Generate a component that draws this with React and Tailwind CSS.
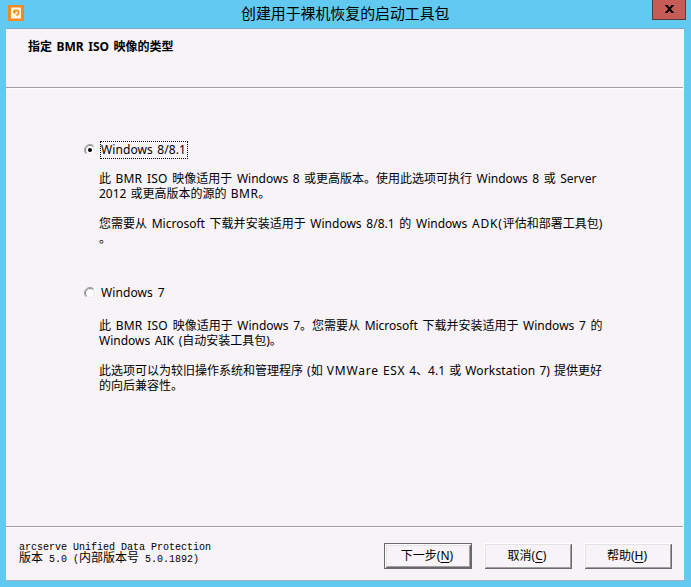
import React from 'react';

const ui = "font-['Noto_Sans','Noto_Sans_CJK_SC',sans-serif]";

function Line({ children, className = '' }) {
  return <div className={`h-[15px] whitespace-pre ${className}`}>{children}</div>;
}

function Latin({ children }) {
  return <span className="font-['Liberation_Mono','Noto_Sans_CJK_SC',monospace] text-[10px]">{children}</span>;
}

function Radio({ checked }) {
  return (
    <svg className="mr-1 shrink-0" width="12" height="12" viewBox="0 0 12 12" fill="none">
      <circle cx="6" cy="6" r="5" fill="#fff" />
      <path d="M2.1 9.9A5.5 5.5 0 0 1 9.9 2.1" stroke="#a09da0" />
      <path d="M2.8 9.2A4.5 4.5 0 0 1 9.2 2.8" stroke="#8a888a" />
      <path d="M2.1 9.9A5.5 5.5 0 0 0 9.9 2.1" stroke="#fff" />
      <path d="M2.8 9.2A4.5 4.5 0 0 0 9.2 2.8" stroke="#e3e3e3" />
      {checked && <circle cx="6" cy="6" r="2" fill="#000" />}
    </svg>
  );
}

function Button({ label, hotkey, primary }) {
  const frame = primary
    ? 'border border-[#696969] shadow-[inset_1px_1px_0_#fff,inset_-1px_-1px_0_#696969,inset_2px_2px_0_#e3e3e3,inset_-2px_-2px_0_#a0a0a0]'
    : 'shadow-[inset_1px_1px_0_#fff,inset_-1px_-1px_0_#696969,inset_2px_2px_0_#e3e3e3,inset_-2px_-2px_0_#a0a0a0]';
  return (
    <button className={`flex h-[26px] w-[88px] items-center justify-center pb-px pr-[2px] text-[12px] leading-[15px] ${frame}`}>
      {label}(<span className="underline underline-offset-2">{hotkey}</span>)
    </button>
  );
}

export default function App() {
  return (
    <div className={`flex h-[587px] w-[691px] flex-col bg-[#62caf0] text-black ${ui}`}>
      <header className="flex h-7 shrink-0 items-start">
        <svg className="ml-2 mt-[5px] shrink-0" width="16" height="16" viewBox="0 0 16 16" fill="none">
          <rect width="16" height="16" fill="#f28a24" />
          <rect x="3" y="2.5" width="10" height="11" rx="1" fill="#fff6e8" />
          <path d="M5.6 7.6A2.5 2.3 0 1 1 8.3 10" stroke="#f28a24" strokeWidth="1.6" />
          <path d="M5 6.5h3.2L6.8 9.2z" fill="#f28a24" />
        </svg>
        <h1 className="ml-[217px] mt-[3px] w-[210px] whitespace-nowrap text-[14.9px] leading-[21px]">创建用于裸机恢复的启动工具包</h1>
        <button className="ml-[201px] flex h-5 w-[34px] items-center justify-center border border-t-0 border-[#573936] bg-[#c75b55] pb-[2px]">
          <svg width="9" height="8" viewBox="0 0 9 8" fill="none">
            <path d="M1.5 .5 7.5 7.5M7.5 .5 1.5 7.5" stroke="#000" strokeWidth="2" />
            <path d="M0 .5h3M6 .5h3M0 7.5h3M6 7.5h3" stroke="#000" />
          </svg>
        </button>
      </header>
      <main className="ml-[6px] flex h-[553px] w-[678px] flex-col border-b border-t border-b-[#a3afbd] border-t-[#79a9c5] bg-[#f7f3f7]">
        <div className="mr-px h-[59px] shrink-0 border-b border-[#a09da0] pl-[22px] pt-[10px] text-[12px] font-bold leading-[15px] shadow-[0_1px_0_#fff]">
          <Line className="[word-spacing:1.4px]">指定 BMR ISO 映像的类型</Line>
        </div>
        <div className="h-[438px] shrink-0 pl-[78px] pt-[53px] text-[12px] leading-[15px]">
          <div className="flex h-[18px] items-center">
            <Radio checked />
            <span className="flex h-[18px] w-[88px] items-center border border-dotted border-black pb-[2px] tracking-[0.1px] whitespace-pre [word-spacing:1px]">Windows 8/8.1</span>
          </div>
          <div className="ml-[15px] mt-[12px]">
            <Line className="[word-spacing:1.4px]">此 <span className="tracking-[0.2px]">BMR ISO </span>映像适用于 Windows 8 或更高版本。使用此选项可执行 Windows 8 或 Server</Line>
            <Line className="[word-spacing:1px]">2012 或更高版本的源的 <span className="tracking-[0.5px]">BMR</span>。</Line>
            <Line className="mt-[15px] [word-spacing:1.6px]">您需要从 Microsoft 下载并安装适用于 Windows 8/8.1 的 Windows <span className="tracking-[0.8px]">ADK(</span>评估和部署工具包)</Line>
            <Line>。</Line>
          </div>
          <div className="mt-[38px] flex h-[18px] items-center">
            <Radio />
            <span className="pb-[2px] pl-px tracking-[0.1px] whitespace-pre [word-spacing:1.5px]">Windows 7</span>
          </div>
          <div className="ml-[15px] mt-[16px]">
            <Line className="[word-spacing:1.5px]">此 <span className="tracking-[0.2px]">BMR ISO </span>映像适用于 Windows 7。您需要从 Microsoft 下载并安装适用于 Windows 7 的</Line>
            <Line className="[word-spacing:1.5px]">Windows AIK (自动安装工具包)。</Line>
            <Line className="mt-[15px] [word-spacing:1px]">此选项可以为较旧操作系统和管理程序 (如 <span className="tracking-[0.8px]">VMWare</span> <span className="tracking-[0.6px]">ESX</span> 4、4.1 或 <span className="tracking-[0.15px]">Workstation</span> 7) 提供更好</Line>
            <Line>的向后兼容性。</Line>
          </div>
        </div>
        <footer className="mr-px flex grow border-t border-[#a09da0] shadow-[inset_0_1px_0_#fff]">
          <div className="ml-[13px] mt-[13px] w-[365px] whitespace-pre text-[12px] leading-[12px]">
            <div className="h-3"><Latin>arcserve Unified Data Protection</Latin></div>
            <div className="h-3">版本<Latin> 5.0 (</Latin>内部版本号<Latin> 5.0.1892)</Latin></div>
          </div>
          <div className="mt-4 flex h-[26px] gap-3">
            <Button label="下一步" hotkey="N" primary />
            <Button label="取消" hotkey="C" />
            <Button label="帮助" hotkey="H" />
          </div>
        </footer>
      </main>
    </div>
  );
}
